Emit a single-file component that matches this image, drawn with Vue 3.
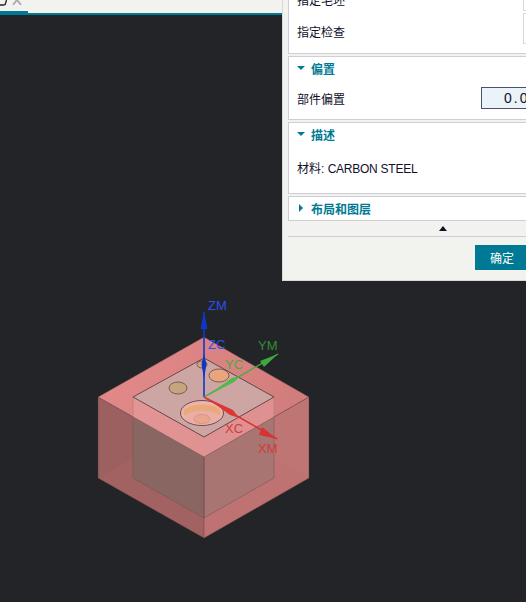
<template>
  <div class="screen">
    <div class="tabbar">
      <div class="tab">
        <svg class="tab-icon" viewBox="0 0 10 6" aria-hidden="true">
          <path d="M0 5h4.500M5 5 6.500 0" fill="none" stroke="#222" stroke-width="1.3" />
        </svg>
        <svg class="tab-close" viewBox="0 0 10 5" aria-hidden="true">
          <path d="M1 5 4.500 0.500h1L9 5" fill="none" stroke="#a9a9b4" stroke-width="1.8" />
        </svg>
      </div>
    </div>

    <svg class="model" viewBox="0 0 526 602" aria-hidden="true">
      <defs>
        <linearGradient id="topFace" x1="0" y1="0" x2="1" y2="0.3">
          <stop offset="0" stop-color="#e58a8a" />
          <stop offset="1" stop-color="#d27d7d" />
        </linearGradient>
      </defs>

      <!-- outer stock, see through -->
      <polygon points="98,397 204,457 204,538 98,478" fill="#9c6060" />
      <polygon points="309,397 204,457 204,538 309,478" fill="#c07575" />
      <polygon points="98,478 204,418 204,538" fill="#a86464" opacity="0.55" />
      <polygon points="309,478 204,418 204,538" fill="#bd7070" opacity="0.7" />

      <!-- inner part -->
      <polygon points="133,397 204,437 204,518 133,478" fill="#8a6663" />
      <polygon points="274,397 204,437 204,518 274,478" fill="#a87572" />
      <path d="M133 397V478L204 518L274 478V397M204 437V518" fill="none" stroke="#6e5050" stroke-width="0.8" opacity="0.6" />

      <!-- outer top face -->
      <polygon points="98,397 204,337 309,397 204,457" fill="url(#topFace)" />
      <polygon points="133,397 204,437 274,397 274,417 204,457 133,417" fill="#e8a0a0" opacity="0.55" />
      <path d="M133 397V417M274 397V417" fill="none" stroke="#b98080" stroke-width="0.8" />
      <path d="M98 397L204 457L309 397M98 397V478L204 538L309 478V397M204 457V538M204 337L98 397M204 337L309 397" fill="none" stroke="#5a3c3c" stroke-width="0.7" opacity="0.6" />

      <!-- inner top face -->
      <polygon points="133,397 204,358 274,397 204,437" fill="#cda5a3" stroke="#33282a" stroke-width="0.7" />

      <!-- holes -->
      <ellipse cx="178" cy="388" rx="9" ry="6" fill="#c6a47c" stroke="#4a4040" stroke-width="0.7" />
      <ellipse cx="219" cy="375.500" rx="10" ry="6.500" fill="#eba57d" stroke="#4a4040" stroke-width="0.7" />
      <ellipse cx="202" cy="364.500" rx="5" ry="3.500" fill="#d8a080" stroke="#4a4040" stroke-width="0.7" />
      <ellipse cx="202" cy="413" rx="21.500" ry="12.500" fill="#efb3ae" stroke="#33282a" stroke-width="0.7" />
      <ellipse cx="202" cy="412.500" rx="18.500" ry="8" fill="#e8aa78" />
      <ellipse cx="202" cy="417.500" rx="17" ry="7" fill="#ebaea5" />
      <ellipse cx="202" cy="419" rx="8" ry="4.500" fill="#eba58f" stroke="#c98b78" stroke-width="0.6" />

      <!-- datum axes -->
      <path d="M204 397V312" stroke="#1038cc" stroke-width="1.6" />
      <polygon points="204,311 200.500,329 207.500,329" fill="#0f37c4" />
      <polygon points="204,354 201.500,364 204,379 206.500,364" fill="#0f37c4" />
      <path d="M204 397L278 354" stroke="#3fae3c" stroke-width="1.4" />
      <polygon points="278,354 260,361 264,367" fill="#3fa83c" />
      <polygon points="240,376 232,378 207,396 234,382" fill="#50b844" />
      <path d="M204 397L277 439" stroke="#d93434" stroke-width="1.6" />
      <polygon points="277,439 262,427 259,435" fill="#d63434" />
      <polygon points="239,418 233,410 207,398 230,415" fill="#dd3636" />

      <text x="208" y="310" class="label" fill="#2b4ff0">ZM</text>
      <text x="208" y="349" class="label" fill="#2b4ff0">ZC</text>
      <text x="258" y="350" class="label" fill="#2f8f33">YM</text>
      <text x="225" y="369" class="label" fill="#46ad42">YC</text>
      <text x="225" y="433" class="label" fill="#d23c3c">XC</text>
      <text x="258" y="453" class="label" fill="#d23c3c">XM</text>
    </svg>

    <aside class="panel">
      <div class="cards">
        <section class="card card-top">
          <div class="row row-clipped">
            <span>指定毛坯</span>
            <i class="pick"></i>
          </div>
          <div class="row row-check">
            <span class="check-label">指定检查</span>
            <i class="pick"></i>
          </div>
        </section>

        <section class="card card-offset">
          <h3 class="card-head">
            <span class="caret"></span>
            偏置
          </h3>
          <div class="row">
            <span>部件偏置</span>
            <span class="num-input">0.0</span>
          </div>
        </section>

        <section class="card card-desc">
          <h3 class="card-head">
            <span class="caret"></span>
            描述
          </h3>
          <p class="material">材料: <span class="material-name">CARBON STEEL</span></p>
        </section>

        <section class="card card-layout">
          <h3 class="card-head">
            <span class="caret caret-right"></span>
            布局和图层
          </h3>
        </section>
      </div>

      <div class="collapse"><span class="collapse-arrow"></span></div>
      <div class="footer">
        <button type="button" class="ok">确定</button>
      </div>
    </aside>
  </div>
</template>

<script setup>
</script>

<style>
html,
body {
  margin: 0;
  background: #222427;
}
</style>

<style scoped>
.screen {
  position: relative;
  width: 526px;
  height: 602px;
  overflow: hidden;
  background: #222427;
  font-family: "Liberation Sans", "Noto Sans CJK SC", sans-serif;
}

.tabbar {
  height: 13px;
  background: #f2f2ee;
  border-bottom: 2px solid #007a94;
}

.tab {
  width: 28px;
  height: 13px;
  box-sizing: border-box;
  border-bottom: 2px solid #007a94;
  position: relative;
}

.tab-icon {
  position: absolute;
  left: 0;
  top: 0;
  width: 10px;
  height: 6px;
}

.tab-close {
  position: absolute;
  left: 12px;
  top: 0;
  width: 10px;
  height: 5px;
}

.model {
  position: absolute;
  inset: 0;
  width: 526px;
  height: 602px;
}

.label {
  font-size: 13px;
  font-family: "Liberation Sans", sans-serif;
}

.panel {
  position: absolute;
  top: 0;
  left: 282px;
  width: 244px;
  height: 281px;
  box-sizing: border-box;
  padding-left: 5px;
  display: flex;
  flex-direction: column;
  background: #f2f2ee;
  border-left: 1px solid #d8d8d8;
  border-bottom: 1px solid #d8d8d8;
}

.cards {
  display: flex;
  flex-direction: column;
  gap: 2px;
}

.card {
  background: #fff;
  border: 1px solid #cfcdd6;
  border-right: none;
  box-sizing: border-box;
  padding-left: 8px;
  font-size: 12px;
  color: #10102a;
  overflow: hidden;
}

.card-top {
  height: 54px;
  border-top: none;
}

.card-offset {
  height: 64px;
}

.card-desc {
  height: 72px;
}

.card-layout {
  height: 25px;
}

.row {
  display: flex;
  align-items: center;
  justify-content: space-between;
}

.row-clipped {
  height: 20px;
  margin-top: -9px;
  align-items: stretch;
}

.row-clipped span {
  align-self: center;
  margin-top: -4px;
}

.row-check {
  height: 31px;
  margin-top: 2px;
  align-items: stretch;
}

.check-label {
  align-self: center;
  margin-top: 6px;
}

.pick {
  width: 3px;
  border: 1px solid #d9d9dc;
  border-right: none;
  box-sizing: border-box;
  background: #fff;
}

.card-head {
  margin: 0;
  height: 22px;
  display: flex;
  align-items: center;
  gap: 6px;
  font-size: 12px;
  font-weight: 700;
  color: #007a94;
}

.caret {
  width: 0;
  height: 0;
  border-left: 4px solid transparent;
  border-right: 4px solid transparent;
  border-top: 4px solid #007a94;
}

.caret-right {
  margin-left: 2px;
  margin-right: 2px;
  border-top: 4px solid transparent;
  border-bottom: 4px solid transparent;
  border-left: 4px solid #007a94;
  border-right: none;
}

.card-offset .row {
  margin-top: 8px;
  height: 22px;
}

.num-input {
  width: 45px;
  height: 22px;
  box-sizing: border-box;
  margin-left: auto;
  border: 1px solid #4a5068;
  border-right: none;
  background: #eaf4f8;
  padding-left: 22px;
  line-height: 20px;
  font-size: 14px;
  letter-spacing: 2px;
  white-space: nowrap;
  overflow: hidden;
}

.material {
  margin: 16px 0 0;
  line-height: 17px;
  font-size: 12px;
}

.material-name {
  letter-spacing: -0.25px;
}

.collapse {
  height: 16px;
  box-sizing: border-box;
  padding-right: 79px;
  display: flex;
  justify-content: flex-end;
  align-items: center;
  border-bottom: 1px solid #cfcdd6;
}

.collapse-arrow {
  width: 0;
  height: 0;
  border-left: 4.500px solid transparent;
  border-right: 4.500px solid transparent;
  border-bottom: 5px solid #10102a;
}

.footer {
  display: flex;
  justify-content: flex-end;
  padding-top: 8px;
}

.ok {
  width: 51px;
  height: 25px;
  border: none;
  padding: 0 0 0 3px;
  background: #007a94;
  color: #fff;
  font-family: inherit;
  font-size: 12px;
}
</style>
